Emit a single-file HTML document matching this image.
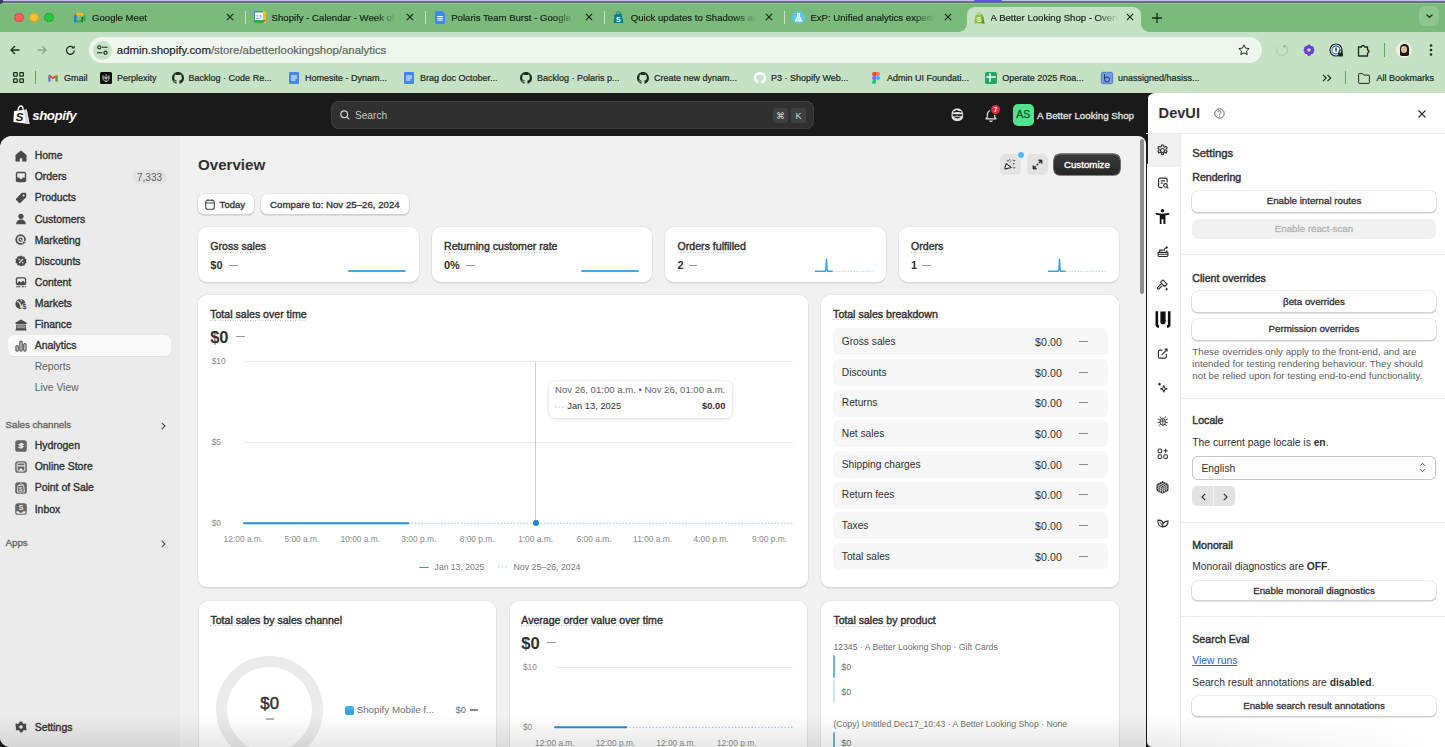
<!DOCTYPE html>
<html><head><meta charset="utf-8">
<style>
*{box-sizing:border-box;margin:0;padding:0}
html,body{width:1445px;height:747px;overflow:hidden;background:#1a1a1a;font-family:"Liberation Sans",sans-serif;color:#303030;position:relative}
.a{position:absolute}
svg{display:block;overflow:visible}
.nw{white-space:nowrap}
/* chrome */
#tabbar{left:0;top:0;width:1445px;height:32px;background:#7aba7b}
.tab{top:0;height:32px;font-size:9.6px;color:#1c241c;-webkit-text-stroke:.22px #1c241c;white-space:nowrap}
.tab .tt{position:absolute;left:30px;top:12px;width:125px;height:13px;overflow:hidden;-webkit-mask-image:linear-gradient(90deg,#000 82%,transparent 100%)}
.tab .cl{position:absolute;left:164px;top:13px;width:8px;height:8px}
.sep{top:11px;width:1px;height:13px;background:#c7e3c8}
#toolbar{left:0;top:32px;width:1445px;height:61px;background:#c5e2c5}
.bm{top:71px;height:14px;font-size:9px;color:#1c241c;-webkit-text-stroke:.2px #1c241c;white-space:nowrap;line-height:14px}
.bm .ic{position:absolute;left:0;top:1px;width:12px;height:12px}
.bm span{position:absolute;left:17px;top:0}

/* shopify */
.nav{left:0;width:180px;height:21px;font-size:10.45px;font-weight:normal;color:#303030;line-height:21px;-webkit-text-stroke:.36px #303030}
.nav span{position:absolute;left:34.7px;top:0}
.nav svg{position:absolute;left:15.3px;top:4.6px;width:12px;height:12px}
.card{background:#fff;border-radius:9px;box-shadow:0 0 0 0.6px #e0e0e0,0 1px 0 0.4px #d4d4d4}
.ttl{font-size:10.58px;font-weight:normal;-webkit-text-stroke:.4px #303030;color:#303030;white-space:nowrap;line-height:12px;background-image:linear-gradient(90deg,#b5b5b5 50%,transparent 50%);background-size:2.5px 1px;background-repeat:repeat-x;background-position:0 11.5px;padding-bottom:1px}
.ax{font-size:8.4px;color:#8a8a8a;white-space:nowrap;line-height:10px}
.btn{background:#fff;border-radius:6px;box-shadow:0 0 0 0.6px #dcdcdc,0 1px 0 0.6px #c8c8c8;font-size:9.7px;font-weight:normal;-webkit-text-stroke:.3px #303030;color:#303030;text-align:center;white-space:nowrap}
</style></head><body>
<!-- ===== BROWSER CHROME ===== -->
<div class="a" id="tabbar"></div>
<div class="a" style="left:0;top:0;width:1445px;height:1px;background:#c2c3e6"></div>
<div class="a" style="left:0;top:1px;width:1445px;height:1.5px;background:#6a6a86"></div>
<div class="a" style="left:974px;top:0;width:28px;height:2px;background:#5a55e0;border-radius:0 0 2px 2px"></div>
<div class="a" style="left:0;top:2.5px;width:1445px;height:1.2px;background:#84cc88;border-top-left-radius:4px"></div>
<div class="a" style="left:0;top:0;width:3px;height:4px;background:#3a3a6a;border-bottom-right-radius:3px"></div>
<!-- traffic lights -->
<div class="a" style="left:14px;top:12.8px;width:9.6px;height:9.6px;border-radius:50%;background:#fe5f57;border:0.5px solid #e0443e"></div>
<div class="a" style="left:29.1px;top:12.8px;width:9.6px;height:9.6px;border-radius:50%;background:#febc2e;border:0.5px solid #dea123"></div>
<div class="a" style="left:44.2px;top:12.8px;width:9.6px;height:9.6px;border-radius:50%;background:#28c840;border:0.5px solid #1aab29"></div>

<div class="a tab" style="left:62.0px;width:180px"><div class="a" style="left:12.5px;top:12px;width:11px;height:11px"><svg class="a" style="left:-0.5px;top:1px" width="11.6" height="9.4" viewBox="0 0 11.6 9.6"><path d="M0 2.3L2.3 0v2.3z" fill="#ea4335"/><path d="M2.3 0H8.9V3.3L7.4 4.6V2.3H2.3z" fill="#fbbc04"/><path d="M0 2.3h2.3v7.3H1a1 1 0 0 1-1-1z" fill="#1a73e8"/><path d="M2.3 7.4h6.6v2.2H2.3z" fill="#34a853"/><path d="M7.4 4.6L8.9 3.3v6.3H7.4z" fill="#188038"/><path d="M8.9 4.4L11.6 2v7.2L8.9 6.8z" fill="#34a853"/><path d="M7.4 4.6l1.5-1.3v3.5l-1.5-1z" fill="#137333"/></svg></div><div class="tt">Google Meet</div><svg class="cl" viewBox="0 0 9 9"><path d="M1 1l7 7M8 1L1 8" stroke="#1a2a1a" stroke-width="1.3"/></svg></div>
<div class="a sep" style="left:245.0px"></div>
<div class="a tab" style="left:241.6px;width:180px"><div class="a" style="left:12.5px;top:12px;width:11px;height:11px"><svg class="a" style="left:0;top:-1px" width="12" height="12" viewBox="0 0 12 12"><rect x="0" y="0" width="12" height="12" rx="1.5" fill="#fbbc04"/><rect x="0" y="0" width="9" height="9" rx="1" fill="#fff"/><path d="M0 0h9v1.5H0z" fill="#4285f4"/><path d="M0 9h9v3H1.5A1.5 1.5 0 0 1 0 10.5z" fill="#34a853"/><path d="M0 0v9h1V0z" fill="#4285f4"/><text x="4.6" y="7.6" font-size="5.5" text-anchor="middle" fill="#4285f4" font-family="Liberation Sans">13</text><path d="M9 9h3l-3 3z" fill="#ea4335"/></svg></div><div class="tt">Shopify - Calendar - Week of January 13, 2025</div><svg class="cl" viewBox="0 0 9 9"><path d="M1 1l7 7M8 1L1 8" stroke="#1a2a1a" stroke-width="1.3"/></svg></div>
<div class="a sep" style="left:424.6px"></div>
<div class="a tab" style="left:421.2px;width:180px"><div class="a" style="left:12.5px;top:12px;width:11px;height:11px"><svg class="a" style="left:1px;top:-1px" width="10" height="13" viewBox="0 0 10 13"><path d="M0 1.2A1.2 1.2 0 0 1 1.2 0H7l3 3v8.8A1.2 1.2 0 0 1 8.8 13H1.2A1.2 1.2 0 0 1 0 11.8z" fill="#4285f4"/><path d="M2.2 5.5h5.6M2.2 7.3h5.6M2.2 9.1h5.6" stroke="#fff" stroke-width="1"/></svg></div><div class="tt">Polaris Team Burst - Google Docs</div><svg class="cl" viewBox="0 0 9 9"><path d="M1 1l7 7M8 1L1 8" stroke="#1a2a1a" stroke-width="1.3"/></svg></div>
<div class="a sep" style="left:604.2px"></div>
<div class="a tab" style="left:600.8px;width:180px"><div class="a" style="left:12.5px;top:12px;width:11px;height:11px"><svg class="a" style="left:0;top:-1px" width="11" height="13" viewBox="0 0 11 13"><path d="M1.5 3.5L8.5 2.5 10.5 12 0.5 12z" fill="#0e7c86"/><path d="M3.5 3.5C3.5 1.5 4.5 0.5 5.5 0.5S7 1.5 7 3" stroke="#0e7c86" stroke-width="0.9" fill="none"/><text x="5.4" y="10.5" font-size="7" font-weight="bold" text-anchor="middle" fill="#fff" font-family="Liberation Sans">S</text></svg></div><div class="tt">Quick updates to Shadows and Borders</div><svg class="cl" viewBox="0 0 9 9"><path d="M1 1l7 7M8 1L1 8" stroke="#1a2a1a" stroke-width="1.3"/></svg></div>
<div class="a sep" style="left:783.8px"></div>
<div class="a tab" style="left:780.4px;width:180px"><div class="a" style="left:12.5px;top:12px;width:11px;height:11px"><svg class="a" style="left:-1px;top:-1px" width="13" height="13" viewBox="0 0 13 13"><circle cx="6.5" cy="6.5" r="6.5" fill="#5ac8f0"/><path d="M5 2.5h3M5.5 2.5v3L3 10h7L7.5 5.5v-3" stroke="#fff" stroke-width="1" fill="#fff" fill-opacity=".6"/></svg></div><div class="tt">ExP: Unified analytics experience</div><svg class="cl" viewBox="0 0 9 9"><path d="M1 1l7 7M8 1L1 8" stroke="#1a2a1a" stroke-width="1.3"/></svg></div>
<!-- active tab -->
<div class="a" id="toolbar"></div>
<div class="a" style="left:966.6px;top:7px;width:174.4px;height:26px;background:#c5e2c5;border-radius:8px 8px 0 0"></div>
<div class="a" style="left:958.6px;top:24px;width:8px;height:8px;background:radial-gradient(circle at 0 0,transparent 7.5px,#c5e2c5 8px)"></div>
<div class="a" style="left:1141px;top:24px;width:8px;height:8px;background:radial-gradient(circle at 100% 0,transparent 7.5px,#c5e2c5 8px)"></div>
<div class="a tab" style="left:966.6px;width:175px">
 <svg class="a" style="left:7px;top:11.5px" width="11" height="12" viewBox="0 0 11 12"><path d="M1.3 3.2L8.6 2.3 10.6 11.5 0.4 11.5z" fill="#95bf47"/><path d="M8.6 2.3L10.6 11.5 8 11.5z" fill="#5e8e3e"/><path d="M3.3 3.2C3.3 1.3 4.3 0.4 5.3 0.4S6.9 1.3 6.9 2.9" stroke="#95bf47" stroke-width="0.9" fill="none"/><text x="5" y="10" font-size="6.5" font-weight="bold" text-anchor="middle" fill="#fff" font-family="Liberation Sans">S</text></svg>
 <div class="tt" style="left:24px;width:128px">A Better Looking Shop - Overview · Analytics</div>
 <svg class="cl" style="left:159px" viewBox="0 0 9 9"><path d="M1 1l7 7M8 1L1 8" stroke="#1a2a1a" stroke-width="1.3"/></svg>
</div>
<svg class="a" style="left:1151.5px;top:12.5px" width="10" height="10" viewBox="0 0 10 10"><path d="M5 0v10M0 5h10" stroke="#1a2a1a" stroke-width="1.3"/></svg>
<div class="a" style="left:1419px;top:6px;width:20px;height:20px;border-radius:6px;background:#8fc690"></div>
<svg class="a" style="left:1425.5px;top:14px" width="7" height="4" viewBox="0 0 7 4"><path d="M0.5 0.5L3.5 3.5 6.5 0.5" stroke="#1a2a1a" stroke-width="1.2" fill="none"/></svg>

<!-- nav buttons -->
<svg class="a" style="left:10px;top:45px" width="10" height="10" viewBox="0 0 10 10"><path d="M9.5 5H1M5 1L1 5l4 4" stroke="#1f2a1f" stroke-width="1.3" fill="none"/></svg>
<svg class="a" style="left:37px;top:45px" width="10" height="10" viewBox="0 0 10 10"><path d="M0.5 5H9M5 1l4 4-4 4" stroke="#8aa58a" stroke-width="1.3" fill="none"/></svg>
<svg class="a" style="left:64.5px;top:44.5px" width="11" height="11" viewBox="0 0 11 11"><path d="M9.3 5.5A3.9 3.9 0 1 1 8.2 2.6" stroke="#1f2a1f" stroke-width="1.3" fill="none"/><path d="M9.6 0.6v3H6.6z" fill="#1f2a1f"/></svg>
<!-- omnibox -->
<div class="a" style="left:89px;top:37px;width:1173px;height:25.5px;border-radius:13px;background:#eef6ee"></div>
<div class="a" style="left:92.5px;top:40.5px;width:19px;height:19px;border-radius:50%;background:#c5e2c5"></div>
<svg class="a" style="left:96.5px;top:45px" width="11" height="10" viewBox="0 0 11 10"><circle cx="2.3" cy="2.3" r="1.6" stroke="#1f2a1f" stroke-width="1.1" fill="none"/><path d="M5 2.3h5.5M0 7.7h5.5" stroke="#1f2a1f" stroke-width="1.1"/><circle cx="8.5" cy="7.7" r="1.6" stroke="#1f2a1f" stroke-width="1.1" fill="none"/></svg>
<div class="a nw" style="left:116.8px;top:42.5px;font-size:11.4px;line-height:15px;color:#1c241c;-webkit-text-stroke:.2px #1c241c">admin.shopify.com<span style="color:#5a665a;-webkit-text-stroke:.2px #5a665a">/store/abetterlookingshop/analytics</span></div>
<svg class="a" style="left:1238px;top:43.5px" width="12" height="12" viewBox="0 0 12 12"><path d="M6 0.8l1.55 3.3 3.6.45-2.65 2.5.7 3.55L6 8.85 2.8 10.6l.7-3.55L.85 4.55l3.6-.45z" stroke="#1f2a1f" stroke-width="1" fill="none" stroke-linejoin="round"/></svg>
<!-- extensions -->
<svg class="a" style="left:1275px;top:43px" width="14" height="14" viewBox="0 0 14 14"><circle cx="7" cy="7" r="5.5" stroke="#b8ccb8" stroke-width="1.3" fill="none" stroke-dasharray="20 8"/><circle cx="9.5" cy="3.5" r="1" fill="#8a9a8a"/></svg>
<svg class="a" style="left:1302px;top:43px" width="14" height="14" viewBox="0 0 14 14"><path d="M7 1.5a2 2 0 0 1 2 1.6 2 2 0 0 1 2.7 2.4 2 2 0 0 1 0 3 2 2 0 0 1-2.7 2.4 2 2 0 0 1-4 0 2 2 0 0 1-2.7-2.4 2 2 0 0 1 0-3A2 2 0 0 1 5 3.1 2 2 0 0 1 7 1.5z" fill="#6b3fd4"/><circle cx="7" cy="7" r="1.8" fill="#c5e2c5"/></svg>
<svg class="a" style="left:1329px;top:42.5px" width="15" height="15" viewBox="0 0 15 15"><circle cx="7" cy="7" r="6" stroke="#1f2a1f" stroke-width="1.2" fill="#fff"/><circle cx="7" cy="7" r="4" stroke="#3b82f6" stroke-width="1.3" fill="none"/><path d="M7 4.5v4" stroke="#1f2a1f" stroke-width="1.3"/><rect x="9" y="9.5" width="5" height="4" rx="0.8" fill="#1f2a1f"/><path d="M10 9.5V8.5a1.5 1.5 0 0 1 3 0v1" stroke="#1f2a1f" stroke-width="0.9" fill="none"/></svg>
<svg class="a" style="left:1357px;top:43px" width="14" height="14" viewBox="0 0 14 14"><path d="M1.5 4h3a1.5 1.5 0 0 1 3 0h3v3a1.5 1.5 0 0 1 0 3v3h-9z" stroke="#1f2a1f" stroke-width="1.3" fill="none" stroke-linejoin="round"/></svg>
<div class="a" style="left:1384px;top:43px;width:1px;height:14px;background:#5aa85e"></div>
<div class="a" style="left:1396px;top:42px;width:16px;height:16px;border-radius:50%;background:#f1ece8;overflow:hidden"><div class="a" style="left:3.5px;top:2px;width:9px;height:12px;border-radius:5px 5px 2px 2px;background:#1a1410"></div><div class="a" style="left:5.3px;top:4px;width:5.4px;height:6.5px;border-radius:50%;background:#e2b89a"></div></div>
<svg class="a" style="left:1429px;top:44px" width="4" height="12" viewBox="0 0 4 12"><circle cx="2" cy="1.5" r="1.3" fill="#1f2a1f"/><circle cx="2" cy="6" r="1.3" fill="#1f2a1f"/><circle cx="2" cy="10.5" r="1.3" fill="#1f2a1f"/></svg>

<!-- bookmarks -->
<svg class="a" style="left:12.5px;top:71.5px" width="11" height="11" viewBox="0 0 11 11"><g stroke="#1f2a1f" stroke-width="1.2" fill="none"><rect x="0.6" y="0.6" width="3.6" height="3.6" rx=".5"/><rect x="6.8" y="0.6" width="3.6" height="3.6" rx=".5"/><rect x="0.6" y="6.8" width="3.6" height="3.6" rx=".5"/><rect x="6.8" y="6.8" width="3.6" height="3.6" rx=".5"/></g></svg>
<div class="a" style="left:35px;top:71px;width:1px;height:13px;background:#5aa85e"></div>
<div class="a bm" style="left:47px"><svg class="ic" viewBox="0 0 12 12" style="top:2.5px;height:9px"><path d="M0 1.5v8.5h2.5V4.5L6 7l3.5-2.5V10H12V1.5L10.5 0.5 6 4 1.5 0.5z" fill="#ea4335"/><path d="M0 1.5v8.5h2.5V3.5z" fill="#4285f4"/><path d="M9.5 3.5V10H12V1.5z" fill="#34a853"/><path d="M10.5 0.5L12 1.5 9.5 3.5V2z" fill="#fbbc04"/></svg><span>Gmail</span></div>
<div class="a bm" style="left:100px"><svg class="ic" viewBox="0 0 12 12"><rect width="12" height="12" rx="1.5" fill="#111"/><path d="M6 2v8M3 3.5l3 3 3-3M3 3.5v4l3 2.5 3-2.5v-4M2.5 6h7" stroke="#ddd" stroke-width=".7" fill="none"/></svg><span>Perplexity</span></div>

<div class="a bm" style="left:171.6px"><svg class="ic" viewBox="0 0 16 16"><path fill="#1f2a1f" d="M8 0C3.58 0 0 3.58 0 8c0 3.54 2.29 6.53 5.47 7.59.4.07.55-.17.55-.38 0-.19-.01-.82-.01-1.49-2.01.37-2.53-.49-2.69-.94-.09-.23-.48-.94-.82-1.13-.28-.15-.68-.52-.01-.53.63-.01 1.08.58 1.23.82.72 1.21 1.87.87 2.33.66.07-.52.28-.87.51-1.07-1.78-.2-3.64-.89-3.64-3.95 0-.87.31-1.59.82-2.15-.08-.2-.36-1.02.08-2.12 0 0 .67-.21 2.2.82.64-.18 1.32-.27 2-.27.68 0 1.36.09 2 .27 1.53-1.04 2.2-.82 2.2-.82.44 1.1.16 1.92.08 2.12.51.56.82 1.27.82 2.15 0 3.07-1.87 3.75-3.65 3.95.29.25.54.73.54 1.48 0 1.07-.01 1.93-.01 2.2 0 .21.15.46.55.38A8.013 8.013 0 0016 8c0-4.42-3.58-8-8-8z"/></svg><span>Backlog · Code Re...</span></div>
<div class="a bm" style="left:288px"><svg class="ic" viewBox="0 0 12 12"><rect x="1" y="0" width="10" height="12" rx="1.3" fill="#4285f4"/><path d="M3 4h6M3 6h6M3 8h4.5" stroke="#fff" stroke-width="1"/></svg><span>Homesite - Dynam...</span></div>
<div class="a bm" style="left:403px"><svg class="ic" viewBox="0 0 12 12"><rect x="1" y="0" width="10" height="12" rx="1.3" fill="#4285f4"/><path d="M3 4h6M3 6h6M3 8h4.5" stroke="#fff" stroke-width="1"/></svg><span>Brag doc October...</span></div>
<div class="a bm" style="left:520px"><svg class="ic" viewBox="0 0 16 16"><path fill="#1f2a1f" d="M8 0C3.58 0 0 3.58 0 8c0 3.54 2.29 6.53 5.47 7.59.4.07.55-.17.55-.38 0-.19-.01-.82-.01-1.49-2.01.37-2.53-.49-2.69-.94-.09-.23-.48-.94-.82-1.13-.28-.15-.68-.52-.01-.53.63-.01 1.08.58 1.23.82.72 1.21 1.87.87 2.33.66.07-.52.28-.87.51-1.07-1.78-.2-3.64-.89-3.64-3.95 0-.87.31-1.59.82-2.15-.08-.2-.36-1.02.08-2.12 0 0 .67-.21 2.2.82.64-.18 1.32-.27 2-.27.68 0 1.36.09 2 .27 1.53-1.04 2.2-.82 2.2-.82.44 1.1.16 1.92.08 2.12.51.56.82 1.27.82 2.15 0 3.07-1.87 3.75-3.65 3.95.29.25.54.73.54 1.48 0 1.07-.01 1.93-.01 2.2 0 .21.15.46.55.38A8.013 8.013 0 0016 8c0-4.42-3.58-8-8-8z"/></svg><span>Backlog · Polaris p...</span></div>
<div class="a bm" style="left:637px"><svg class="ic" viewBox="0 0 16 16"><path fill="#1f2a1f" d="M8 0C3.58 0 0 3.58 0 8c0 3.54 2.29 6.53 5.47 7.59.4.07.55-.17.55-.38 0-.19-.01-.82-.01-1.49-2.01.37-2.53-.49-2.69-.94-.09-.23-.48-.94-.82-1.13-.28-.15-.68-.52-.01-.53.63-.01 1.08.58 1.23.82.72 1.21 1.87.87 2.33.66.07-.52.28-.87.51-1.07-1.78-.2-3.64-.89-3.64-3.95 0-.87.31-1.59.82-2.15-.08-.2-.36-1.02.08-2.12 0 0 .67-.21 2.2.82.64-.18 1.32-.27 2-.27.68 0 1.36.09 2 .27 1.53-1.04 2.2-.82 2.2-.82.44 1.1.16 1.92.08 2.12.51.56.82 1.27.82 2.15 0 3.07-1.87 3.75-3.65 3.95.29.25.54.73.54 1.48 0 1.07-.01 1.93-.01 2.2 0 .21.15.46.55.38A8.013 8.013 0 0016 8c0-4.42-3.58-8-8-8z"/></svg><span>Create new dynam...</span></div>
<div class="a bm" style="left:754px"><svg class="ic" viewBox="0 0 16 16"><path fill="#ffffff" d="M8 0C3.58 0 0 3.58 0 8c0 3.54 2.29 6.53 5.47 7.59.4.07.55-.17.55-.38 0-.19-.01-.82-.01-1.49-2.01.37-2.53-.49-2.69-.94-.09-.23-.48-.94-.82-1.13-.28-.15-.68-.52-.01-.53.63-.01 1.08.58 1.23.82.72 1.21 1.87.87 2.33.66.07-.52.28-.87.51-1.07-1.78-.2-3.64-.89-3.64-3.95 0-.87.31-1.59.82-2.15-.08-.2-.36-1.02.08-2.12 0 0 .67-.21 2.2.82.64-.18 1.32-.27 2-.27.68 0 1.36.09 2 .27 1.53-1.04 2.2-.82 2.2-.82.44 1.1.16 1.92.08 2.12.51.56.82 1.27.82 2.15 0 3.07-1.87 3.75-3.65 3.95.29.25.54.73.54 1.48 0 1.07-.01 1.93-.01 2.2 0 .21.15.46.55.38A8.013 8.013 0 0016 8c0-4.42-3.58-8-8-8z"/></svg><span>P3 · Shopify Web...</span></div>
<div class="a bm" style="left:870px"><svg class="ic" viewBox="0 0 12 12"><path d="M4 0h2v4H4a2 2 0 0 1 0-4z" fill="#f24e1e"/><path d="M6 0h2a2 2 0 0 1 0 4H6z" fill="#ff7262"/><path d="M4 4h2v4H4a2 2 0 0 1 0-4z" fill="#a259ff"/><circle cx="8" cy="6" r="2" fill="#1abcfe"/><path d="M4 8h2v2a2 2 0 1 1-2-2z" fill="#0acf83"/></svg><span>Admin UI Foundati...</span></div>
<div class="a bm" style="left:985.2px"><svg class="ic" viewBox="0 0 12 12"><rect x="0" y="0" width="12" height="12" rx="1.8" fill="#23a566"/><path d="M1.8 5h8.4M5 1.8v7.8" stroke="#fff" stroke-width="1.5" stroke-linecap="round"/></svg><span>Operate 2025 Roa...</span></div>
<div class="a bm" style="left:1101px"><svg class="ic" viewBox="0 0 12 12"><rect x="0.3" y="0.3" width="11.4" height="11.4" rx="1.5" fill="#6d9eeb" stroke="#3a5a9a" stroke-width=".6"/><circle cx="6" cy="7.5" r="2.5" stroke="#2a3a6a" stroke-width="1" fill="none"/><path d="M3.5 2v5.5" stroke="#2a3a6a" stroke-width="1"/></svg><span>unassigned/hasiss...</span></div>

<svg class="a" style="left:1322px;top:74px" width="10" height="8" viewBox="0 0 10 8"><path d="M1 .8l3.2 3.2L1 7.2M5.5 .8l3.2 3.2-3.2 3.2" stroke="#1f2a1f" stroke-width="1.2" fill="none"/></svg>
<div class="a" style="left:1345px;top:71px;width:1px;height:13px;background:#5aa85e"></div>
<div class="a bm" style="left:1358px"><svg class="ic" viewBox="0 0 12 11" style="top:2px;height:11px"><path d="M0.6 1.2a.6.6 0 0 1 .6-.6h3.3l1.3 1.5h5a.6.6 0 0 1 .6.6v7.1a.6.6 0 0 1-.6.6H1.2a.6.6 0 0 1-.6-.6z" stroke="#1f2a1f" stroke-width="1" fill="none"/></svg><span style="left:18.5px">All Bookmarks</span></div>
<!-- ===== SHOPIFY TOP BAR ===== -->
<div class="a" style="left:0;top:93px;width:1146px;height:654px;background:#1a1a1a"></div>
<svg class="a" style="left:13px;top:104.5px" width="17" height="20" viewBox="0 0 17 20"><path d="M1.1 6L13.8 4.6 16.6 19 0.3 17.1z" fill="#fff"/><path d="M11 4.9L13.8 4.6 16.6 19 12.5 18.5z" fill="#d9d9d9"/><path d="M5 5.6C5.3 2.6 6.6 1 8 1c1.3 0 2 1.2 2.2 3.8" stroke="#fff" stroke-width="1.3" fill="none"/><path d="M6.6 1.9c.5.3.9 1 1 2" stroke="#1a1a1a" stroke-width=".5" fill="none"/><text x="6.6" y="15.6" font-size="11.5" font-weight="bold" font-style="italic" text-anchor="middle" fill="#1a1a1a" font-family="Liberation Sans">S</text></svg>
<div class="a nw" style="left:32.2px;top:108.3px;font-size:13.3px;font-weight:bold;font-style:italic;color:#fff;letter-spacing:-0.45px">shopify</div>
<!-- search -->
<div class="a" style="left:330.5px;top:101px;width:483px;height:27.5px;border-radius:8px;background:#303030;box-shadow:inset 0 0 0 0.7px #444"></div>
<svg class="a" style="left:340px;top:110px" width="10" height="10" viewBox="0 0 10 10"><circle cx="4.2" cy="4.2" r="3.4" stroke="#cfcfcf" stroke-width="1.2" fill="none"/><path d="M6.7 6.7L9.3 9.3" stroke="#cfcfcf" stroke-width="1.2"/></svg>
<div class="a nw" style="left:354.9px;top:108.5px;font-size:10.2px;color:#c8c8c8;line-height:13px">Search</div>
<div class="a" style="left:773px;top:107.8px;width:15px;height:15px;border-radius:3px;background:#404040"></div>
<div class="a nw" style="left:773px;top:108.5px;width:15px;text-align:center;font-size:9px;color:#d6d6d6;line-height:14px">&#8984;</div>
<div class="a" style="left:791px;top:107.8px;width:15px;height:15px;border-radius:3px;background:#404040"></div>
<div class="a nw" style="left:791px;top:108.5px;width:15px;text-align:center;font-size:9px;color:#d6d6d6;line-height:14px">K</div>
<!-- right icons -->
<svg class="a" style="left:950.6px;top:108.4px" width="12.6" height="13.4" viewBox="0 0 12.6 13.4"><path d="M6.3.4C2.6.4.5 2.8.5 6.4v1.6c0 3.2 2.4 5 5.8 5s5.8-1.8 5.8-5V6.4C12.1 2.8 10 .4 6.3.4z" fill="#e3e3e3"/><path d="M1.8 3.9c1-.9 1.6-.5 2.4-.9s1.1-1.2 2.1-.8c1 .4 1.3 1.2 2.4.9 1-.3 1.6.1 2.3.8-.3.7-1 .6-1.7.6-.8 0-1.5-.4-3-.4S4.2 4.4 3.4 4.5c-.7 0-1.3 0-1.6-.6z" fill="#1a1a1a"/><path d="M1.4 6.2h9.8v.7l-.8 1.3H7.7l-.9-.8h-1l-.9.8H2.2l-.8-1.3z" fill="#1a1a1a"/><path d="M3.2 10c.8-.6 1.6-1.2 3.1-1.2s2.3.6 3.1 1.2c-.6.4-1.2.2-1.7.1-.5-.1-.9.4-1.4.4s-.9-.5-1.4-.4c-.5.1-1.1.3-1.7-.1z" fill="#1a1a1a"/></svg>
<svg class="a" style="left:984.5px;top:108.5px" width="12" height="13" viewBox="0 0 12 13"><path d="M2.3 8.2V6.2C2.3 3.6 3.8 1.3 6 1.3s3.7 2.3 3.7 4.9v2l1.3 1.6H1z" stroke="#e3e3e3" stroke-width="1.2" fill="none" stroke-linejoin="round"/><path d="M4.6 11.5a1.5 1.5 0 0 0 2.8 0" stroke="#e3e3e3" stroke-width="1.2" fill="none"/></svg>
<div class="a" style="left:991.1px;top:104.9px;width:9.2px;height:9.2px;border-radius:50%;background:#e22c38;box-shadow:0 0 0 1px #1a1a1a"></div>
<div class="a nw" style="left:991.1px;top:104.6px;width:9.2px;text-align:center;font-size:6.8px;font-weight:bold;color:#fff;line-height:10px">7</div>
<div class="a" style="left:1012.7px;top:104px;width:21px;height:21.5px;border-radius:5px;background:#52e38c"></div>
<div class="a nw" style="left:1012.7px;top:104px;width:21px;text-align:center;font-size:10.5px;font-weight:normal;-webkit-text-stroke:.3px #0b5a2b;color:#0b5a2b;line-height:21.5px">AS</div>
<div class="a nw" style="left:1037px;top:108.5px;font-size:9.75px;font-weight:normal;-webkit-text-stroke:.3px #e3e3e3;color:#e3e3e3;line-height:13px">A Better Looking Shop</div>

<!-- ===== SIDEBAR ===== -->
<div class="a" style="left:0;top:136px;width:1146.2px;height:611px;background:#f1f1f1;border-radius:12px 8px 0 10px"></div>
<div class="a" style="left:0;top:136px;width:180px;height:611px;background:#ebebeb;border-radius:12px 0 0 10px"></div>
<div class="a" style="left:7.7px;top:335.1px;width:163px;height:21.1px;border-radius:6px;background:#fafafa;box-shadow:0 0.5px 1px rgba(0,0,0,.06)"></div>
<div class="a nav" style="top:145.0px"><svg viewBox="0 0 12 12"><path d="M6 0.8L0.8 5v6.2h3.7V8h3v3.2h3.7V5z" fill="#4a4a4a" stroke="#4a4a4a" stroke-width=".6" stroke-linejoin="round"/></svg><span>Home</span></div>
<div class="a nav" style="top:166.2px"><svg viewBox="0 0 12 12"><rect x="0.8" y="0.8" width="10.4" height="10.4" rx="2" fill="#4a4a4a"/><path d="M2.2 2.2h7.6v4.3H7.5a1.5 1.5 0 0 1-3 0H2.2z" fill="#ebebeb"/></svg><span>Orders</span></div>
<div class="a nav" style="top:187.3px"><svg viewBox="0 0 12 12"><path d="M6.8 0.8h3.4a1 1 0 0 1 1 1v3.4L5.6 10.8a1.2 1.2 0 0 1-1.7 0L1.2 8.1a1.2 1.2 0 0 1 0-1.7z" fill="#4a4a4a"/><circle cx="8.6" cy="3.4" r="1" fill="#ebebeb"/></svg><span>Products</span></div>
<div class="a nav" style="top:208.5px"><svg viewBox="0 0 12 12"><circle cx="6" cy="3.3" r="2.6" fill="#4a4a4a"/><path d="M1.2 11.2c0-3 2.2-4.6 4.8-4.6s4.8 1.6 4.8 4.6z" fill="#4a4a4a"/></svg><span>Customers</span></div>
<div class="a nav" style="top:229.7px"><svg viewBox="0 0 12 12"><circle cx="5.6" cy="5.6" r="4.4" stroke="#4a4a4a" stroke-width="1.7" fill="none"/><circle cx="5.6" cy="5.6" r="1.5" stroke="#4a4a4a" stroke-width="1.4" fill="none"/><path d="M6.6 6.6l5 1.9-2 .9-.9 2z" fill="#4a4a4a" stroke="#ebebeb" stroke-width=".8" stroke-linejoin="round"/></svg><span>Marketing</span></div>
<div class="a nav" style="top:250.8px"><svg viewBox="0 0 12 12"><path d="M6 0.5l1.5 1.2 1.9-.2.5 1.9 1.7.9-.6 1.8.6 1.8-1.7.9-.5 1.9-1.9-.2L6 11.5 4.5 10.3l-1.9.2-.5-1.9L.4 7.7l.6-1.8L.4 4.1l1.7-.9.5-1.9 1.9.2z" fill="#4a4a4a"/><path d="M4 8l4-4" stroke="#ebebeb" stroke-width="1.1"/><circle cx="4.2" cy="4.2" r=".8" fill="#ebebeb"/><circle cx="7.8" cy="7.8" r=".8" fill="#ebebeb"/></svg><span>Discounts</span></div>
<div class="a nav" style="top:271.9px"><svg viewBox="0 0 12 12"><rect x=".8" y="1.2" width="10.4" height="8" rx="2" fill="#4a4a4a"/><rect x="2.1" y="2.5" width="7.8" height="5.4" rx="1" fill="#ebebeb"/><path d="M2.1 7.2l2.3-2.1 1.6 1.3 1.9-1.9 2 2.2v1.2H2.1z" fill="#4a4a4a"/><path d="M1.2 10.8h4.2M6.8 10.8h2.2M9.8 10.8h1.2" stroke="#4a4a4a" stroke-width="1.1"/></svg><span>Content</span></div>
<div class="a nav" style="top:293.0px"><svg viewBox="0 0 12 12"><circle cx="5.4" cy="6" r="5" fill="#4a4a4a"/><path d="M2 3.2c1.2.3 1.8 1 2.6 1.8.7.7.3 1.6 1 2.2.6.5.2 1.6-.3 2.5M5.8 1.2c-.2 1 .4 1.8 1.4 2" stroke="#ebebeb" stroke-width="1.1" fill="none"/><circle cx="9.3" cy="8.6" r="3.2" fill="#ebebeb"/><text x="9.3" y="11.3" font-size="7.6" font-weight="bold" text-anchor="middle" fill="#4a4a4a" font-family="Liberation Sans">$</text></svg><span>Markets</span></div>
<div class="a nav" style="top:314.1px"><svg viewBox="0 0 12 12"><path d="M6 .5l5.5 3v1.6H.5V3.5z" fill="#4a4a4a"/><rect x="1.2" y="5.6" width="9.6" height="4.4" fill="#4a4a4a"/><path d="M3 6.3v3M5 6.3v3M7 6.3v3M9 6.3v3" stroke="#ebebeb" stroke-width=".9"/><rect x=".5" y="10" width="11" height="1.6" rx=".4" fill="#4a4a4a"/></svg><span>Finance</span></div>
<div class="a nav" style="top:335.2px"><svg viewBox="0 0 12 12"><rect x="1" y="5.5" width="2.2" height="5.7" rx="1.1" stroke="#4a4a4a" stroke-width="1.2" fill="none"/><rect x="4.9" y="1" width="2.2" height="10.2" rx="1.1" stroke="#4a4a4a" stroke-width="1.2" fill="none"/><rect x="8.8" y="3.5" width="2.2" height="7.7" rx="1.1" stroke="#4a4a4a" stroke-width="1.2" fill="none"/></svg><span>Analytics</span></div>
<div class="a" style="left:132px;top:169.5px;width:35px;height:14.5px;border-radius:6px;background:#e3e3e3"></div>
<div class="a nw" style="left:132px;top:170.5px;width:35px;text-align:center;font-size:10px;color:#616161;line-height:13px">7,333</div>
<div class="a nav" style="top:356.3px;color:#616161;font-weight:normal;font-size:10.3px;-webkit-text-stroke:0"><span>Reports</span></div>
<div class="a nav" style="top:377.4px;color:#616161;font-weight:normal;font-size:10.3px;-webkit-text-stroke:0"><span>Live View</span></div>
<div class="a nw" style="left:5.6px;top:418.5px;font-size:9.69px;font-weight:normal;-webkit-text-stroke:.3px #616161;color:#616161;line-height:12px">Sales channels</div>
<svg class="a" style="left:160.5px;top:422px" width="5" height="8" viewBox="0 0 5 8"><path d="M.8.8L4 4 .8 7.2" stroke="#4a4a4a" stroke-width="1.1" fill="none"/></svg>
<div class="a nav" style="top:435.3px"><svg viewBox="0 0 12 12"><rect x=".2" y=".2" width="11.6" height="11.6" rx="2.6" fill="#666"/><path d="M2.6 5.2l3.6-2.4 3.2 1.4-3.6 2.4zM2.6 7.6l3.6-2.2 3.2 1.2-3.6 2.4z" fill="#ebebeb"/><path d="M2.6 5.2l3.2 1.2M2.6 7.6l3.2 1.4" stroke="#666" stroke-width=".6"/></svg><span>Hydrogen</span></div>
<div class="a nav" style="top:456.2px"><svg viewBox="0 0 12 12"><rect x=".2" y=".2" width="11.6" height="11.6" rx="2.6" fill="#666"/><rect x="2.2" y="2" width="7.6" height="8" rx=".8" stroke="#ebebeb" stroke-width="1" fill="none"/><path d="M2.2 4.6h7.6M4 4.6v1.3M6 4.6v1.3M8 4.6v1.3" stroke="#ebebeb" stroke-width=".9"/><path d="M4.6 10V7.6h2.8V10" fill="#ebebeb"/></svg><span>Online Store</span></div>
<div class="a nav" style="top:477.3px"><svg viewBox="0 0 12 12"><rect x=".2" y=".2" width="11.6" height="11.6" rx="2.6" fill="#666"/><path d="M3 3.6l5.6-.6.8 7H2.4z" stroke="#ebebeb" stroke-width=".9" fill="none" stroke-linejoin="round"/><path d="M4.6 3.4c0-1.3.6-2 1.3-2s1.2.6 1.2 1.6" stroke="#ebebeb" stroke-width=".8" fill="none"/><text x="5.7" y="8.9" font-size="5" font-weight="bold" text-anchor="middle" fill="#ebebeb" font-family="Liberation Sans">S</text></svg><span>Point of Sale</span></div>
<div class="a nav" style="top:498.6px"><svg viewBox="0 0 12 12"><rect x=".2" y=".2" width="11.6" height="11.6" rx="2.6" fill="#666"/><text x="6" y="7" font-size="7" font-weight="bold" text-anchor="middle" fill="#ebebeb" font-family="Liberation Sans">S</text><path d="M1.5 8.3h2.3c.4 1 1.2 1.5 2.2 1.5s1.8-.5 2.2-1.5h2.3v1.5a1 1 0 0 1-1 1H2.5a1 1 0 0 1-1-1z" fill="#ebebeb"/></svg><span>Inbox</span></div>
<div class="a nw" style="left:5.6px;top:536.5px;font-size:9.69px;font-weight:normal;-webkit-text-stroke:.3px #616161;color:#616161;line-height:12px">Apps</div>
<svg class="a" style="left:160.5px;top:539.5px" width="5" height="8" viewBox="0 0 5 8"><path d="M.8.8L4 4 .8 7.2" stroke="#4a4a4a" stroke-width="1.1" fill="none"/></svg>
<div class="a nav" style="top:716.8px"><svg viewBox="0 0 12 12"><path d="M6 .4l1.3.3.4 1.5 1.4.8 1.5-.4.9 1 -.5 1.5.1.9.1.9.5 1.5-.9 1-1.5-.4-1.4.8-.4 1.5-1.3.3-1.3-.3-.4-1.5-1.4-.8-1.5.4-.9-1 .5-1.5L.7 6l.1-.9-.5-1.5.9-1 1.5.4 1.4-.8.4-1.5z" fill="#4a4a4a"/><circle cx="6" cy="6" r="1.8" fill="#ebebeb"/></svg><span>Settings</span></div>
<!-- ===== MAIN HEADER ===== -->
<div class="a nw" style="left:198px;top:156px;font-size:15.1px;font-weight:bold;color:#303030;line-height:18px">Overview</div>
<div class="a" style="left:1000.2px;top:154px;width:20.6px;height:21px;border-radius:5px;background:#e3e3e3"></div>
<svg class="a" style="left:1004px;top:158px" width="13" height="13" viewBox="0 0 13 13"><path d="M2.3 5.6L7.2 9.4 1.8 10.9a.7.7 0 0 1-.9-.9z" stroke="#303030" stroke-width="1.15" fill="#fff" stroke-linejoin="round"/><path d="M3.3 2.6l.7-.7.7.7-.7.7zM9.5 2.6l.7-.7.7.7-.7.7zM9.5 9.8l.7-.7.7.7-.7.7z" fill="#303030" stroke="#303030" stroke-width=".5"/><path d="M6 4.4l.8-1M7.8 2.3l.2-.5M5.6 1.4l.3.9M8.8 6.2l1.6-.6" stroke="#303030" stroke-width="1"/></svg>
<div class="a" style="left:1017.5px;top:151.6px;width:6px;height:6px;border-radius:50%;background:#4fb8f6;box-shadow:0 0 0 1px #f1f1f1"></div>
<div class="a" style="left:1027.4px;top:154px;width:20.6px;height:21px;border-radius:5px;background:#e3e3e3"></div>
<svg class="a" style="left:1032.2px;top:159.3px" width="11" height="11" viewBox="0 0 11 11"><path d="M2.2 8.8L8.8 2.2" stroke="#303030" stroke-width="1.15" stroke-dasharray="2.4 0.9"/><path d="M6.4 1h3.6v3.6z" fill="#303030" stroke="#303030" stroke-width=".8" stroke-linejoin="round"/><path d="M4.6 10H1V6.4z" fill="#303030" stroke="#303030" stroke-width=".8" stroke-linejoin="round"/></svg>
<div class="a" style="left:1054.2px;top:154.2px;width:65.4px;height:21px;border-radius:6px;background:linear-gradient(#3a3a3a,#262626);box-shadow:0 0 0 .6px #1a1a1a,inset 0 1px 0 rgba(255,255,255,.15)"></div>
<div class="a nw" style="left:1054.2px;top:158.5px;width:65.4px;text-align:center;font-size:9.74px;font-weight:normal;-webkit-text-stroke:.35px #fff;color:#fff;line-height:12px">Customize</div>
<!-- date buttons -->
<div class="a btn" style="left:198px;top:194.4px;width:56.2px;height:19.6px"></div>
<svg class="a" style="left:204.5px;top:198.8px" width="10" height="11" viewBox="0 0 10 11"><rect x=".7" y="1.2" width="8.6" height="9" rx="2" stroke="#4a4a4a" stroke-width="1.1" fill="none"/><path d="M.7 4h8.6M3 .2v2M7 .2v2" stroke="#4a4a4a" stroke-width="1.1"/></svg>
<div class="a nw" style="left:219.6px;top:198.5px;font-size:9.59px;font-weight:normal;-webkit-text-stroke:.3px #303030;color:#303030;line-height:11px">Today</div>
<div class="a btn" style="left:261.4px;top:194.4px;width:148px;height:19.6px"></div>
<div class="a nw" style="left:270.1px;top:198.5px;font-size:9.68px;font-weight:normal;-webkit-text-stroke:.3px #303030;color:#303030;line-height:11px">Compare to: Nov 25–26, 2024</div>

<!-- KPI cards -->
<div class="a card" style="left:198px;top:226.7px;width:220.5px;height:55.5px"></div>
<div class="a ttl" style="left:210.3px;top:240px">Gross sales</div>
<div class="a nw" style="left:210.3px;top:258.5px;font-size:11px;font-weight:bold;color:#303030;line-height:13px">$0</div>
<div class="a" style="left:229.3px;top:264.6px;width:8.5px;height:1.5px;background:#8f8f8f"></div>
<div class="a" style="left:347.6px;top:270.2px;width:58px;height:2px;border-radius:1px;background:#44a8e8"></div>
<div class="a card" style="left:431.7px;top:226.7px;width:220.5px;height:55.5px"></div>
<div class="a ttl" style="left:444.0px;top:240px">Returning customer rate</div>
<div class="a nw" style="left:444.0px;top:258.5px;font-size:11px;font-weight:bold;color:#303030;line-height:13px">0%</div>
<div class="a" style="left:466.0px;top:264.6px;width:8.5px;height:1.5px;background:#8f8f8f"></div>
<div class="a" style="left:581.3px;top:270.2px;width:58px;height:2px;border-radius:1px;background:#44a8e8"></div>
<div class="a card" style="left:665.3px;top:226.7px;width:220.5px;height:55.5px"></div>
<div class="a ttl" style="left:677.5999999999999px;top:240px">Orders fulfilled</div>
<div class="a nw" style="left:677.5999999999999px;top:258.5px;font-size:11px;font-weight:bold;color:#303030;line-height:13px">2</div>
<div class="a" style="left:688.5999999999999px;top:264.6px;width:8.5px;height:1.5px;background:#8f8f8f"></div>
<svg class="a" style="left:815.0px;top:257px" width="58" height="16" viewBox="0 0 58 16"><path d="M17.5 14.3h40" stroke="#a8d4f2" stroke-width="1.2" stroke-dasharray="1.2 1.8"/><path d="M0 14.3h9.5c1 0 1.3-.5 1.5-2L11.5 2.2l.5 10.1c.2 1.5.5 2 1.5 2h4" stroke="#3aa3e3" stroke-width="1.6" fill="none" stroke-linejoin="round"/></svg>
<div class="a card" style="left:898.7px;top:226.7px;width:220.5px;height:55.5px"></div>
<div class="a ttl" style="left:911.0px;top:240px">Orders</div>
<div class="a nw" style="left:911.0px;top:258.5px;font-size:11px;font-weight:bold;color:#303030;line-height:13px">1</div>
<div class="a" style="left:922.0px;top:264.6px;width:8.5px;height:1.5px;background:#8f8f8f"></div>
<svg class="a" style="left:1048.4px;top:257px" width="58" height="16" viewBox="0 0 58 16"><path d="M17.5 14.3h40" stroke="#a8d4f2" stroke-width="1.2" stroke-dasharray="1.2 1.8"/><path d="M0 14.3h9.5c1 0 1.3-.5 1.5-2L11.5 2.2l.5 10.1c.2 1.5.5 2 1.5 2h4" stroke="#3aa3e3" stroke-width="1.6" fill="none" stroke-linejoin="round"/></svg>
<!-- ===== CHART CARDS ===== -->
<div class="a card" style="left:198.2px;top:294.6px;width:609.8px;height:292.9px"></div>
<div class="a ttl" style="left:210.2px;top:308.2px">Total sales over time</div>
<div class="a nw" style="left:210.2px;top:326.7px;font-size:16.5px;font-weight:bold;color:#303030;line-height:20px">$0</div>
<div class="a" style="left:235.8px;top:336px;width:9px;height:1.2px;background:#9a9a9a"></div>
<div class="a ax" style="left:211.7px;top:356.2px">$10</div>
<div class="a ax" style="left:211.7px;top:436.9px">$5</div>
<div class="a ax" style="left:211.7px;top:517.8px">$0</div>
<div class="a" style="left:243.6px;top:361.2px;width:549.4px;height:1px;background:#ebebeb"></div>
<div class="a" style="left:243.6px;top:441.7px;width:549.4px;height:1px;background:#ebebeb"></div>
<svg class="a" style="left:243.6px;top:522px" width="550" height="3" viewBox="0 0 550 3"><path d="M164.2 1.3H549.4" stroke="#7cc2ee" stroke-width="1.1" stroke-dasharray="1.4 1.9"/><path d="M0 1.3H164.2" stroke="#1f8fd8" stroke-width="2" stroke-linecap="round"/></svg>
<div class="a" style="left:535.4px;top:361.7px;width:1px;height:161.5px;background:#cfcfcf"></div>
<div class="a" style="left:532.8px;top:520.2px;width:6.2px;height:6.2px;border-radius:50%;background:#1b87cc"></div>
<div class="a ax" style="left:203.4px;top:534.3px;width:80px;text-align:center">12:00 a.m.</div>
<div class="a ax" style="left:261.9px;top:534.3px;width:80px;text-align:center">5:00 a.m.</div>
<div class="a ax" style="left:320.3px;top:534.3px;width:80px;text-align:center">10:00 a.m.</div>
<div class="a ax" style="left:378.8px;top:534.3px;width:80px;text-align:center">3:00 p.m.</div>
<div class="a ax" style="left:437.2px;top:534.3px;width:80px;text-align:center">8:00 p.m.</div>
<div class="a ax" style="left:495.6px;top:534.3px;width:80px;text-align:center">1:00 a.m.</div>
<div class="a ax" style="left:554.1px;top:534.3px;width:80px;text-align:center">6:00 a.m.</div>
<div class="a ax" style="left:612.6px;top:534.3px;width:80px;text-align:center">11:00 a.m.</div>
<div class="a ax" style="left:671.0px;top:534.3px;width:80px;text-align:center">4:00 p.m.</div>
<div class="a ax" style="left:729.5px;top:534.3px;width:80px;text-align:center">9:00 p.m.</div>
<div class="a" style="left:419.4px;top:566.5px;width:9.6px;height:1.8px;border-radius:1px;background:#2a9ae0"></div>
<div class="a ax" style="left:434.6px;top:562.3px;font-size:8.6px;color:#7a7a7a">Jan 13, 2025</div>
<svg class="a" style="left:498px;top:566.3px" width="10" height="2" viewBox="0 0 10 2"><path d="M0 1h10" stroke="#8cc8ef" stroke-width="1.2" stroke-dasharray="1.3 2.4"/></svg>
<div class="a ax" style="left:513.5px;top:562.3px;font-size:8.8px;color:#7a7a7a">Nov 25–26, 2024</div>
<div class="a" style="left:549.1px;top:380.5px;width:182.6px;height:37.4px;border-radius:6px;background:#fff;box-shadow:0 1px 4px rgba(0,0,0,.13),0 0 0 .5px rgba(0,0,0,.05)"></div>
<div class="a nw" style="left:555px;top:383.8px;font-size:9.57px;color:#616161;line-height:11px">Nov 26, 01:00 a.m. • Nov 26, 01:00 a.m.</div>
<svg class="a" style="left:555px;top:406px" width="9" height="2" viewBox="0 0 9 2"><path d="M0 1h9" stroke="#8cc8ef" stroke-width="1.2" stroke-dasharray="1.3 2.2"/></svg>
<div class="a nw" style="left:567.3px;top:401.2px;font-size:9.3px;color:#303030;line-height:11px">Jan 13, 2025</div>
<div class="a nw" style="left:625px;top:401.2px;width:100.3px;text-align:right;font-size:9.3px;font-weight:bold;color:#303030;line-height:11px">$0.00</div>
<div class="a card" style="left:821px;top:294.7px;width:297.8px;height:292.8px"></div>
<div class="a ttl" style="left:833.1px;top:307.8px">Total sales breakdown</div>
<div class="a" style="left:833px;top:328.2px;width:274.6px;height:27.2px;border-radius:6px;background:#f7f7f7"></div>
<div class="a nw" style="left:841.8px;top:335.8px;font-size:10.2px;color:#303030;line-height:12px">Gross sales</div>
<div class="a nw" style="left:990px;top:335.8px;width:72.1px;text-align:right;font-size:10.6px;color:#303030;line-height:12px;letter-spacing:.1px">$0.00</div>
<div class="a" style="left:1079.4px;top:341px;width:8.2px;height:1px;background:#8a8a8a"></div>
<div class="a" style="left:833px;top:358.9px;width:274.6px;height:27.2px;border-radius:6px;background:#f7f7f7"></div>
<div class="a nw" style="left:841.8px;top:366.5px;font-size:10.2px;color:#303030;line-height:12px">Discounts</div>
<div class="a nw" style="left:990px;top:366.5px;width:72.1px;text-align:right;font-size:10.6px;color:#303030;line-height:12px;letter-spacing:.1px">$0.00</div>
<div class="a" style="left:1079.4px;top:372px;width:8.2px;height:1px;background:#8a8a8a"></div>
<div class="a" style="left:833px;top:389.6px;width:274.6px;height:27.2px;border-radius:6px;background:#f7f7f7"></div>
<div class="a nw" style="left:841.8px;top:397.2px;font-size:10.2px;color:#303030;line-height:12px">Returns</div>
<div class="a nw" style="left:990px;top:397.2px;width:72.1px;text-align:right;font-size:10.6px;color:#303030;line-height:12px;letter-spacing:.1px">$0.00</div>
<div class="a" style="left:1079.4px;top:402px;width:8.2px;height:1px;background:#8a8a8a"></div>
<div class="a" style="left:833px;top:420.2px;width:274.6px;height:27.2px;border-radius:6px;background:#f7f7f7"></div>
<div class="a nw" style="left:841.8px;top:427.8px;font-size:10.2px;color:#303030;line-height:12px">Net sales</div>
<div class="a nw" style="left:990px;top:427.8px;width:72.1px;text-align:right;font-size:10.6px;color:#303030;line-height:12px;letter-spacing:.1px">$0.00</div>
<div class="a" style="left:1079.4px;top:433px;width:8.2px;height:1px;background:#8a8a8a"></div>
<div class="a" style="left:833px;top:450.9px;width:274.6px;height:27.2px;border-radius:6px;background:#f7f7f7"></div>
<div class="a nw" style="left:841.8px;top:458.5px;font-size:10.2px;color:#303030;line-height:12px">Shipping charges</div>
<div class="a nw" style="left:990px;top:458.5px;width:72.1px;text-align:right;font-size:10.6px;color:#303030;line-height:12px;letter-spacing:.1px">$0.00</div>
<div class="a" style="left:1079.4px;top:464px;width:8.2px;height:1px;background:#8a8a8a"></div>
<div class="a" style="left:833px;top:481.6px;width:274.6px;height:27.2px;border-radius:6px;background:#f7f7f7"></div>
<div class="a nw" style="left:841.8px;top:489.2px;font-size:10.2px;color:#303030;line-height:12px">Return fees</div>
<div class="a nw" style="left:990px;top:489.2px;width:72.1px;text-align:right;font-size:10.6px;color:#303030;line-height:12px;letter-spacing:.1px">$0.00</div>
<div class="a" style="left:1079.4px;top:494px;width:8.2px;height:1px;background:#8a8a8a"></div>
<div class="a" style="left:833px;top:512.3px;width:274.6px;height:27.2px;border-radius:6px;background:#f7f7f7"></div>
<div class="a nw" style="left:841.8px;top:519.9px;font-size:10.2px;color:#303030;line-height:12px">Taxes</div>
<div class="a nw" style="left:990px;top:519.9px;width:72.1px;text-align:right;font-size:10.6px;color:#303030;line-height:12px;letter-spacing:.1px">$0.00</div>
<div class="a" style="left:1079.4px;top:525px;width:8.2px;height:1px;background:#8a8a8a"></div>
<div class="a" style="left:833px;top:543.0px;width:274.6px;height:27.2px;border-radius:6px;background:#f7f7f7"></div>
<div class="a nw" style="left:841.8px;top:550.6px;font-size:10.2px;color:#303030;line-height:12px">Total sales</div>
<div class="a nw" style="left:990px;top:550.6px;width:72.1px;text-align:right;font-size:10.6px;color:#303030;line-height:12px;letter-spacing:.1px">$0.00</div>
<div class="a" style="left:1079.4px;top:556px;width:8.2px;height:1px;background:#8a8a8a"></div>
<!-- ===== BOTTOM CARDS ===== -->
<div class="a card" style="left:198.6px;top:601.1px;width:297.6px;height:160px"></div>
<div class="a ttl" style="left:210.4px;top:613.7px">Total sales by sales channel</div>
<div class="a" style="left:216px;top:656.1px;width:107.4px;height:107.4px;border-radius:50%;border:11px solid #ebebeb"></div>
<div class="a nw" style="left:229.7px;top:693.6px;width:80px;text-align:center;font-size:16.8px;font-weight:normal;-webkit-text-stroke:.45px #303030;color:#303030;line-height:20px">$0</div>
<div class="a" style="left:265.7px;top:718.3px;width:8.6px;height:1.3px;background:#b5b5b5"></div>
<div class="a" style="left:345.2px;top:705.8px;width:8.8px;height:8.8px;border-radius:1.8px;background:linear-gradient(#4cb6f0,#2c9ee2)"></div>
<div class="a nw" style="left:356.7px;top:704.2px;font-size:9.75px;color:#6f6f6f;line-height:11px">Shopify Mobile f...</div>
<div class="a nw" style="left:455.5px;top:704.2px;font-size:9.4px;color:#6f6f6f;line-height:11px">$0</div>
<div class="a" style="left:469.5px;top:709.3px;width:8.4px;height:1.4px;background:#8a8a8a"></div>
<div class="a card" style="left:509.6px;top:601.1px;width:297.5px;height:160px"></div>
<div class="a ttl" style="left:521.3px;top:613.7px">Average order value over time</div>
<div class="a nw" style="left:521.3px;top:632.7px;font-size:16.5px;font-weight:bold;color:#303030;line-height:20px">$0</div>
<div class="a" style="left:547.3px;top:641.8px;width:8.6px;height:1.2px;background:#9a9a9a"></div>
<div class="a ax" style="left:522.9px;top:662.2px">$10</div>
<div class="a ax" style="left:522.9px;top:721.9px">$0</div>
<div class="a" style="left:554.9px;top:666.7px;width:237.9px;height:1px;background:#ebebeb"></div>
<svg class="a" style="left:554.9px;top:725.6px" width="238" height="3" viewBox="0 0 238 3"><path d="M71.1 1.3H237.9" stroke="#7cc2ee" stroke-width="1.1" stroke-dasharray="1.4 1.9"/><path d="M0 1.3H71.1" stroke="#1f8fd8" stroke-width="2" stroke-linecap="round"/></svg>
<div class="a ax" style="left:514.9px;top:737.5px;width:80px;text-align:center">12:00 a.m.</div>
<div class="a ax" style="left:575.5px;top:737.5px;width:80px;text-align:center">12:00 p.m.</div>
<div class="a ax" style="left:636.1px;top:737.5px;width:80px;text-align:center">12:00 a.m.</div>
<div class="a ax" style="left:696.7px;top:737.5px;width:80px;text-align:center">12:00 p.m.</div>
<div class="a card" style="left:821.1px;top:601.1px;width:297.7px;height:160px"></div>
<div class="a ttl" style="left:833.4px;top:614.4px">Total sales by product</div>
<div class="a nw" style="left:833.4px;top:642.2px;font-size:8.69px;color:#6f6f6f;line-height:10px">12345 · A Better Looking Shop · Gift Cards</div>
<div class="a" style="left:832.6px;top:655px;width:2.3px;height:23.3px;border-radius:1px;background:#62b6ea"></div>
<div class="a nw" style="left:841.3px;top:661.8px;font-size:9px;color:#6f6f6f;line-height:10px">$0</div>
<div class="a" style="left:832.6px;top:680.3px;width:2.3px;height:23px;border-radius:1px;background:#c9e5f7"></div>
<div class="a nw" style="left:841.3px;top:686.9px;font-size:9px;color:#6f6f6f;line-height:10px">$0</div>
<div class="a nw" style="left:833.4px;top:718.6px;font-size:8.69px;color:#6f6f6f;line-height:10px">(Copy) Untitled Dec17_10:43 · A Better Looking Shop · None</div>
<div class="a" style="left:832.6px;top:731.5px;width:2.3px;height:23.3px;border-radius:1px;background:#62b6ea"></div>
<div class="a nw" style="left:841.3px;top:737.5px;font-size:9px;color:#6f6f6f;line-height:10px">$0</div>
<!-- ===== SCROLLBAR + DEVUI ===== -->
<div class="a" style="left:1140px;top:139px;width:3.9px;height:155px;border-radius:2px;background:#8e8e8e"></div>
<div class="a" style="left:1146.6px;top:93px;width:298.4px;height:654px;background:#fff;border-radius:8px 0 0 5px"></div>
<div class="a" style="left:1146px;top:93px;width:2.2px;height:70.5px;background:#1a1a1a;border-radius:0 0 1.5px 1.5px"></div>
<div class="a nw" style="left:1158.6px;top:104px;font-size:14.6px;font-weight:bold;color:#303030;line-height:18px">DevUI</div>
<svg class="a" style="left:1214.3px;top:108px" width="11" height="11" viewBox="0 0 11 11"><circle cx="5.5" cy="5.5" r="4.7" stroke="#616161" stroke-width="1" fill="none"/><path d="M4 4.3a1.5 1.5 0 1 1 2.2 1.3c-.5.3-.7.6-.7 1.1v.3" stroke="#616161" stroke-width="1" fill="none"/><circle cx="5.5" cy="8.2" r=".6" fill="#616161"/></svg>
<svg class="a" style="left:1418px;top:109.5px" width="8" height="8" viewBox="0 0 8 8"><path d="M.5.5l7 7M7.5.5l-7 7" stroke="#303030" stroke-width="1.2"/></svg>
<div class="a" style="left:1146px;top:133px;width:299px;height:1px;background:#ebebeb"></div>
<div class="a" style="left:1148.2px;top:133.5px;width:31.8px;height:33.4px;background:#f1f1f1"></div>
<div class="a" style="left:1179.6px;top:133px;width:1px;height:614px;background:#ebebeb"></div>
<div class="a nw" style="left:1192.3px;top:147.0px;font-size:11.3px;font-weight:normal;-webkit-text-stroke:.42px #303030;color:#303030;line-height:12px">Settings</div>
<div class="a nw" style="left:1192.3px;top:171.2px;font-size:10.6px;font-weight:normal;-webkit-text-stroke:.42px #303030;color:#303030;line-height:12px">Rendering</div>
<div class="a btn" style="left:1192.3px;top:191.1px;width:243.4px;height:20.5px;line-height:20.5px;font-size:9.72px;">Enable internal routes</div>
<div class="a btn" style="left:1192.3px;top:218.6px;width:243.4px;height:20.0px;line-height:20.0px;font-size:9.72px;background:#f1f1f1;box-shadow:none;color:#b5b5b5;-webkit-text-stroke:.3px #b5b5b5;">Enable react-scan</div>
<div class="a" style="left:1180px;top:254.2px;width:265px;height:1px;background:#ebebeb"></div>
<div class="a nw" style="left:1192.3px;top:271.7px;font-size:10.6px;font-weight:normal;-webkit-text-stroke:.42px #303030;color:#303030;line-height:12px">Client overrides</div>
<div class="a btn" style="left:1192.3px;top:291.4px;width:243.4px;height:21.0px;line-height:21.0px;font-size:9.72px;">βeta overrides</div>
<div class="a btn" style="left:1192.3px;top:318.8px;width:243.4px;height:20.8px;line-height:20.8px;font-size:9.72px;">Permission overrides</div>
<div class="a" style="left:1192.3px;top:345.6px;width:250px;font-size:9.77px;color:#616161;line-height:12.15px">These overrides only apply to the front-end, and are<br>intended for testing rendering behaviour. They should<br>not be relied upon for testing end-to-end functionality.</div>
<div class="a" style="left:1180px;top:397.6px;width:265px;height:1px;background:#ebebeb"></div>
<div class="a nw" style="left:1192.3px;top:414.4px;font-size:10.6px;font-weight:normal;-webkit-text-stroke:.42px #303030;color:#303030;line-height:12px">Locale</div>
<div class="a nw" style="left:1192.3px;top:436.7px;font-size:10.3px;color:#303030;line-height:12px">The current page locale is <b>en</b>.</div>
<div class="a" style="left:1192.3px;top:455.6px;width:243.4px;height:24px;border-radius:6px;background:#fdfdfd;box-shadow:inset 0 0 0 .8px #b5b5b5"></div>
<div class="a nw" style="left:1201.5px;top:462.9px;font-size:10.3px;color:#303030;line-height:12px">English</div>
<svg class="a" style="left:1418.5px;top:462px" width="7" height="11" viewBox="0 0 7 11"><path d="M1 3.8L3.5 1.3 6 3.8M1 7.2l2.5 2.5L6 7.2" stroke="#4a4a4a" stroke-width="1" fill="none"/></svg>
<div class="a" style="left:1192.3px;top:486px;width:42.6px;height:20.4px;border-radius:5px;background:#e3e3e3"></div>
<div class="a" style="left:1213.3px;top:486px;width:.8px;height:20.4px;background:#f4f4f4"></div>
<svg class="a" style="left:1200.5px;top:492.5px" width="5" height="8" viewBox="0 0 5 8"><path d="M4.2.8L1 4l3.2 3.2" stroke="#303030" stroke-width="1.1" fill="none"/></svg>
<svg class="a" style="left:1222.5px;top:492.5px" width="5" height="8" viewBox="0 0 5 8"><path d="M.8.8L4 4 .8 7.2" stroke="#303030" stroke-width="1.1" fill="none"/></svg>
<div class="a" style="left:1180px;top:522.2px;width:265px;height:1px;background:#ebebeb"></div>
<div class="a nw" style="left:1192.3px;top:538.9px;font-size:10.6px;font-weight:normal;-webkit-text-stroke:.42px #303030;color:#303030;line-height:12px">Monorail</div>
<div class="a nw" style="left:1192.3px;top:560.9px;font-size:10.3px;color:#303030;line-height:12px">Monorail diagnostics are <b>OFF</b>.</div>
<div class="a btn" style="left:1192.3px;top:580.7px;width:243.4px;height:19.7px;line-height:19.7px;font-size:9.72px;">Enable monorail diagnostics</div>
<div class="a" style="left:1180px;top:616px;width:265px;height:1px;background:#ebebeb"></div>
<div class="a nw" style="left:1192.3px;top:633.0px;font-size:10.6px;font-weight:normal;-webkit-text-stroke:.42px #303030;color:#303030;line-height:12px">Search Eval</div>
<div class="a nw" style="left:1192.3px;top:655.2px;font-size:10.3px;color:#303030;line-height:12px"><span style="color:#2463d1;text-decoration:underline">View runs</span></div>
<div class="a nw" style="left:1192.3px;top:676.6px;font-size:10.3px;color:#303030;line-height:12px">Search result annotations are <b>disabled</b>.</div>
<div class="a btn" style="left:1192.3px;top:696px;width:243.4px;height:20.2px;line-height:20.2px;font-size:9.72px;">Enable search result annotations</div>
<!-- rail icons -->
<svg class="a" style="left:1156.00px;top:143.60px" width="13" height="13" viewBox="0 0 16 16"><path d="M8 5.6a2.4 2.4 0 1 0 0 4.8 2.4 2.4 0 0 0 0-4.8z" stroke="#303030" stroke-width="1.4" fill="none"/><path d="M6.9 1.2h2.2l.4 1.9 1.3.7 1.8-.7 1.1 1.9-1.5 1.3v1.4l1.5 1.3-1.1 1.9-1.8-.7-1.3.7-.4 1.9H6.9l-.4-1.9-1.3-.7-1.8.7-1.1-1.9 1.5-1.3V6.3L2.3 5l1.1-1.9 1.8.7 1.3-.7z" stroke="#303030" stroke-width="1.4" fill="none" stroke-linejoin="round"/></svg>
<svg class="a" style="left:1156.65px;top:177.15px" width="12.5" height="12.5" viewBox="0 0 16 16"><path d="M13 7V3.5A2 2 0 0 0 11 1.5H4A2 2 0 0 0 2 3.5v8a2 2 0 0 0 2 2h3" stroke="#303030" stroke-width="1.5" fill="none"/><path d="M4.8 5h5.5M4.8 7.8h2.5" stroke="#303030" stroke-width="1.5"/><circle cx="10.8" cy="10.8" r="2.3" stroke="#303030" stroke-width="1.5" fill="none"/><path d="M12.5 12.5l2 2" stroke="#303030" stroke-width="1.5"/></svg>
<svg class="a" style="left:1155.00px;top:209.30px" width="15" height="15" viewBox="0 0 16 16"><circle cx="8" cy="1.9" r="1.8" fill="#111"/><path d="M.8 4.6c.3-.3.7-.4 1.1-.3 2 .5 4 .7 6.1.7s4.1-.2 6.1-.7c.4-.1.8 0 1.1.3v1.3c-1.3.4-2.7.7-4.1.8V16H9V11H7v5H5.1V6.7C3.7 6.6 2.3 6.3 1 5.9z" fill="#111"/></svg>
<svg class="a" style="left:1156.70px;top:246.20px" width="12" height="12" viewBox="0 0 16 16"><path d="M1.5 8.5v4.2a1.3 1.3 0 0 0 1.3 1.3h10.4a1.3 1.3 0 0 0 1.3-1.3V8.5z" stroke="#303030" stroke-width="1.5" fill="none" stroke-linejoin="round"/><path d="M1.5 11h13M3.5 8.5V5.5h5M13 8.5V5.5" stroke="#303030" stroke-width="1.5" fill="none"/><path d="M9.5 6.5c0-3 1.5-4.5 4-4.5M12 .5l1.8 1.5L12 3.6" stroke="#303030" stroke-width="1.4" fill="none"/></svg>
<svg class="a" style="left:1156.40px;top:279.20px" width="12" height="12" viewBox="0 0 16 16"><path d="M9.2 1.3l5.5 5.5-3.2 3.2-5.5-5.5z" stroke="#303030" stroke-width="1.5" fill="none" stroke-linejoin="round"/><path d="M6.6 6.9L2 11.5a1.3 1.3 0 0 0 1.8 1.8L8.4 8.7" stroke="#303030" stroke-width="1.5" fill="none"/><path d="M14.2 11.2c.8 1.2 1.4 1.9 1.4 2.7a1.4 1.4 0 0 1-2.8 0c0-.8.6-1.5 1.4-2.7z" fill="#303030"/></svg>
<svg class="a" style="left:1154.50px;top:310.50px" width="16" height="16" viewBox="0 0 16 16"><path d="M1.8 .2V13.5c0 1.3.8 2 2.2 2.2M14.2 .2V13.5c0 1.3-.8 2-2.2 2.2" stroke="#111" stroke-width="2.6" fill="none"/><path d="M5.4 .5h5.2v10.2a2.6 2.6 0 0 1-5.2 0z" fill="#111"/></svg>
<svg class="a" style="left:1156.85px;top:347.85px" width="11.5" height="11.5" viewBox="0 0 16 16"><path d="M13 8.5v3.5a2 2 0 0 1-2 2H4a2 2 0 0 1-2-2V5a2 2 0 0 1 2-2h3.5" stroke="#303030" stroke-width="1.6" fill="none"/><path d="M6.5 9.5l7-7M10.5 1.5h3.5V5" stroke="#303030" stroke-width="1.6" fill="none"/></svg>
<svg class="a" style="left:1156.85px;top:382.05px" width="11.5" height="11.5" viewBox="0 0 16 16"><path d="M9.5 5l1.3 3.2L14 9.5l-3.2 1.3L9.5 14l-1.3-3.2L5 9.5l3.2-1.3z" stroke="#303030" stroke-width="1.5" fill="none" stroke-linejoin="round"/><path d="M3.5 1v4M1.5 3h4" stroke="#303030" stroke-width="1.5"/></svg>
<svg class="a" style="left:1156.85px;top:414.95px" width="11.5" height="11.5" viewBox="0 0 16 16"><ellipse cx="8" cy="9.5" rx="3.8" ry="4.8" stroke="#303030" stroke-width="1.3" fill="none"/><path d="M4.2 8.5h7.6M8 5v9M5.5 4.5L4 2M10.5 4.5L12 2M4.2 7L1 5.5M11.8 7L15 5.5M4.2 10.5H.8M11.8 10.5h3.4M4.8 13l-2.5 2M11.2 13l2.5 2" stroke="#303030" stroke-width="1.2" fill="none"/></svg>
<svg class="a" style="left:1156.85px;top:448.15px" width="11.5" height="11.5" viewBox="0 0 16 16"><rect x="1.5" y="1.5" width="5" height="5" rx="1.6" stroke="#303030" stroke-width="1.5" fill="none"/><rect x="1.5" y="9.5" width="5" height="5" rx="1.6" stroke="#303030" stroke-width="1.5" fill="none"/><rect x="9.5" y="9.5" width="5" height="5" rx="1.6" stroke="#303030" stroke-width="1.5" fill="none"/><path d="M12 1v5.5M9.2 3.8h5.6" stroke="#303030" stroke-width="1.5"/></svg>
<svg class="a" style="left:1156.10px;top:480.50px" width="13" height="13" viewBox="0 0 16 16"><path d="M8 .8l6.8 3.6v7.2L8 15.2l-6.8-3.6V4.4z" fill="#111" stroke="#111" stroke-width="1" stroke-linejoin="round"/><path d="M10.27 6.8L3.47 3.2M12.53 5.6L5.73 2M5.73 6.8L12.53 3.2M3.47 5.6L10.27 2M5.73 6.8v7.2M3.47 5.6v7.2M8 10.4L1.2 6.8M8 12.8L1.2 9.2M10.27 6.8v7.2M12.53 5.6v7.2M8 10.4l6.8-3.6M8 12.8l6.8-3.6M8 8L14.8 4.4M8 8L1.2 4.4M8 8v7.2" stroke="#fff" stroke-width=".75" fill="none"/></svg>
<svg class="a" style="left:1156.60px;top:516.40px" width="12" height="12" viewBox="0 0 16 16"><path d="M7.5 14.5C3 14.5 1 11 1.2 5.5c3.8-.2 6.6 1.5 7.3 5" stroke="#303030" stroke-width="1.5" fill="none" stroke-linejoin="round"/><path d="M7.6 14.5c-.6-3 .6-7.5 7.2-8-.1 4.5-2.6 7.8-7.2 8z" stroke="#303030" stroke-width="1.5" fill="none" stroke-linejoin="round"/><path d="M3.5 8c1.8 1.3 3.2 3.5 4 6.5" stroke="#303030" stroke-width="1.2" fill="none"/></svg>
<!-- bottom vignette -->
<div class="a" style="left:0;top:715px;width:1146px;height:32px;background:linear-gradient(rgba(0,0,0,0),rgba(0,0,0,.09));border-bottom-left-radius:10px"></div>
<div class="a" style="left:1146px;top:715px;width:299px;height:32px;background:linear-gradient(90deg,rgba(0,0,0,.08),rgba(0,0,0,.03) 60%,rgba(0,0,0,0));-webkit-mask-image:linear-gradient(transparent,#000);border-radius:0 0 0 5px"></div>

</body></html>
